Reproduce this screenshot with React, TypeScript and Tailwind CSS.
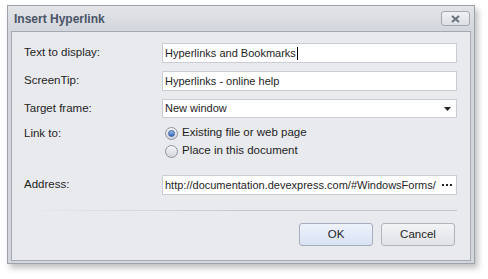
const font = { fontFamily: '"Liberation Sans", Arial, sans-serif' };

function Field({ value, caret }: { value: string; caret?: boolean }) {
  return (
    <div className="flex h-[20px] min-w-0 flex-1 items-center border border-[#c9ccd3] bg-white px-[2px] text-[11px] leading-none text-[#1e1e1e]">
      <span className="whitespace-nowrap">{value}</span>
      {caret && <span className="ml-px inline-block h-[13px] w-px bg-black" />}
    </div>
  );
}

function Radio({ checked, label }: { checked?: boolean; label: string }) {
  return (
    <div className="flex h-[18px] items-center gap-[4px]">
      <span className="relative flex h-[13px] w-[13px] items-center justify-center rounded-full border border-[#8e939c] bg-gradient-to-b from-[#f4f5f7] to-[#d3d6dc]">
        {checked && (
          <span className="h-[7px] w-[7px] rounded-full border border-[#3b62a8] bg-gradient-to-b from-[#9ec2ee] to-[#2e63b8]" />
        )}
      </span>
      <span className="text-[11.5px] text-[#1e1e1e]">{label}</span>
    </div>
  );
}

function Row({ label, children }: { label: string; children: React.ReactNode }) {
  return (
    <div className="flex items-center">
      <div className="w-[138px] shrink-0 text-[11.5px] text-[#1e1e1e]">{label}</div>
      {children}
    </div>
  );
}

export default function App() {
  return (
    <div className="h-[279px] w-[488px] bg-white pl-[7px] pt-[5px]" style={font}>
      <div className="flex h-[259px] w-[468px] flex-col border border-[#9ea2aa] bg-[#d3d6dc] shadow-[3px_4px_6px_rgba(0,0,0,0.25)]">
        {/* title bar */}
        <div className="flex h-[25px] items-center justify-between bg-gradient-to-b from-[#e2e4e8] to-[#d3d6dc] pl-[6px] pr-[4px]">
          <span className="text-[12px] font-bold text-[#4a5466]">Insert Hyperlink</span>
          <button className="flex h-[15px] w-[29px] items-center justify-center rounded-[3px] border border-[#a3a7af] bg-gradient-to-b from-[#f0f1f3] to-[#dcdfe4]">
            <svg width="9" height="8" viewBox="0 0 9 8">
              <path d="M1 1 L8 7 M8 1 L1 7" stroke="#6b717c" strokeWidth="2" />
            </svg>
          </button>
        </div>

        {/* body */}
        <div className="mx-[3px] mb-[2px] flex flex-1 flex-col border border-[#a5a9b1] bg-[#e9eaee] pl-[12px] pr-[13px] pt-[11px]">
          <div className="flex flex-col gap-[8px]">
            <Row label="Text to display:">
              <Field value="Hyperlinks and Bookmarks" caret />
            </Row>
            <Row label="ScreenTip:">
              <Field value="Hyperlinks - online help" />
            </Row>
            <Row label="Target frame:">
              <div className="flex h-[19px] flex-1 items-center justify-between border border-[#c9ccd3] bg-white px-[2px] text-[11px] text-[#1e1e1e]">
                <span>New window</span>
                <svg width="7" height="4" viewBox="0 0 7 4" className="mr-[3px]">
                  <path d="M0 0 H7 L3.5 4 Z" fill="#222" />
                </svg>
              </div>
            </Row>
          </div>

          <div className="mt-[6px] flex">
            <div className="w-[138px] shrink-0 pt-[1px] text-[11.5px] text-[#1e1e1e]">Link to:</div>
            <div className="flex flex-col pl-[3px]">
              <Radio checked label="Existing file or web page" />
              <Radio label="Place in this document" />
            </div>
          </div>

          <div className="mt-[15px]">
            <Row label="Address:">
              <div className="flex h-[20px] min-w-0 flex-1 items-center justify-between overflow-hidden border border-[#c9ccd3] bg-white px-[2px] text-[11px] text-[#1e1e1e]">
                <span className="min-w-0 whitespace-nowrap">
                  http://documentation.devexpress.com/#WindowsForms/
                </span>
                <svg width="10" height="2" viewBox="0 0 10 2" className="mr-[2px] shrink-0">
                  <rect x="0" y="0" width="2" height="2" fill="#222" />
                  <rect x="4" y="0" width="2" height="2" fill="#222" />
                  <rect x="8" y="0" width="2" height="2" fill="#222" />
                </svg>
              </div>
            </Row>
          </div>

          <div className="mt-[15px] h-px bg-gradient-to-r from-transparent via-[#c4c7ce] to-[#c4c7ce]" />

          <div className="mt-[12px] flex justify-end gap-[8px] pr-[2px]">
            <button className="h-[23px] w-[74px] rounded-[3px] border border-[#a5adc0] bg-gradient-to-b from-[#eef2fb] to-[#d9e2f4] text-[11.5px] text-[#1e1e1e]">
              OK
            </button>
            <button className="h-[23px] w-[74px] rounded-[3px] border border-[#b0b4bc] bg-gradient-to-b from-[#f3f4f6] to-[#e1e3e8] text-[11.5px] text-[#1e1e1e]">
              Cancel
            </button>
          </div>
        </div>
      </div>
    </div>
  );
}
